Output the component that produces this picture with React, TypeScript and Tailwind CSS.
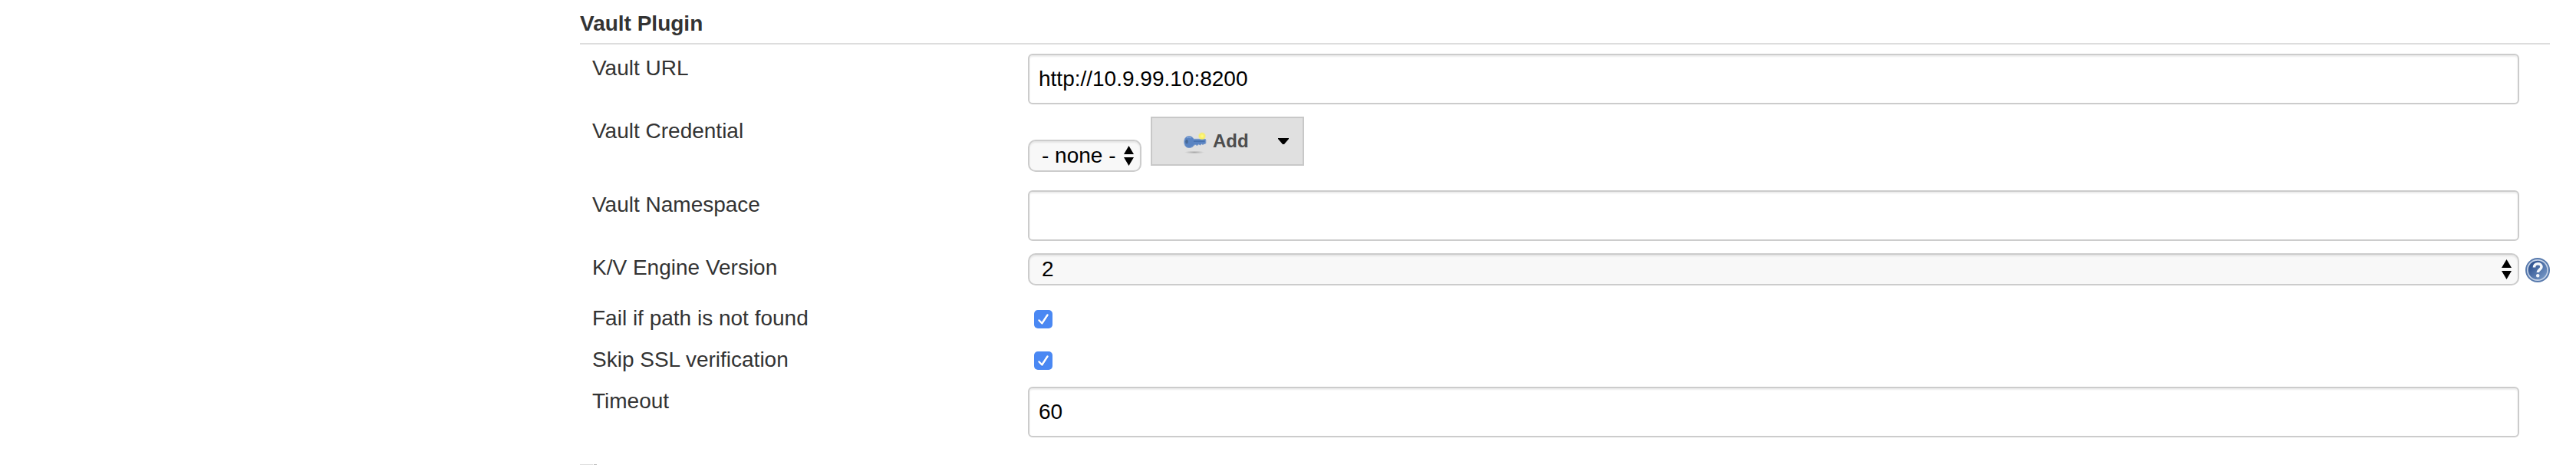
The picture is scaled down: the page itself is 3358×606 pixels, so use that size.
import React from "react";

function Row({ label, height, children }: { label: string; height: string; children?: React.ReactNode }) {
  return (
    <div className={`flex items-start ${height}`}>
      <div className="w-[584px] shrink-0 pl-4 pt-[3px] text-[#333]">{label}</div>
      {children}
    </div>
  );
}

function TextBox({ value }: { value?: string }) {
  return (
    <div className="h-[66px] w-[1944px] rounded-[6px] border-2 border-[#ccc] bg-white pl-3 pt-[15px] text-black shadow-[inset_0_2px_2px_rgba(0,0,0,0.075)]">
      {value}
    </div>
  );
}

function Select({ value, width }: { value: string; width: string }) {
  return (
    <div className={`flex h-[42px] items-start justify-between rounded-[10px] border-2 border-[#ccc] bg-[#f8f8f8] pl-4 pr-2 pt-[3px] text-black shadow-[inset_0_2px_2px_rgba(0,0,0,0.075)] ${width}`}>
      <span className="whitespace-nowrap">{value}</span>
      <svg className="mt-[3px] h-[26px] w-[13px] shrink-0" viewBox="0 0 13 26">
        <path d="M6.5 0 13 11H0zM0 15h13L6.5 26z" fill="#000" />
      </svg>
    </div>
  );
}

function Checkbox() {
  return (
    <svg className="ml-2 mt-2 h-6 w-6" viewBox="0 0 24 24">
      <rect width="24" height="24" rx="5" fill="#4a88f3" />
      <path d="M6.5 14.3 10.3 18.5 17.5 7.5" fill="none" stroke="#3a74dd" strokeWidth="2.4" strokeLinecap="round" strokeLinejoin="round" />
      <path d="M6.5 13.5 10.3 17.5 17.5 6.5" fill="none" stroke="#fff" strokeWidth="2.5" strokeLinecap="round" strokeLinejoin="round" />
    </svg>
  );
}

function KeyIcon() {
  return (
    <svg className="h-8 w-8" viewBox="0 0 32 32">
      <defs>
        <radialGradient id="glow">
          <stop offset="0" stopColor="#fffb8c" />
          <stop offset="0.6" stopColor="#f8ee60" />
          <stop offset="1" stopColor="#f4ea80" stopOpacity="0" />
        </radialGradient>
        <radialGradient id="shade">
          <stop offset="0" stopColor="#999" stopOpacity="0.8" />
          <stop offset="1" stopColor="#999" stopOpacity="0" />
        </radialGradient>
      </defs>
      <ellipse cx="15" cy="28.5" rx="13" ry="2" fill="url(#shade)" />
      <path d="M8 7.5c2.600 0 4.800 1.200 6 3.800h14.500c.8 0 1.300.5 1.300 1.200v3.500c0 .8-.5 1.500-1.300 1.500h-1l-1.500 1-1.500-1-2 1.500-2-1-2 1.500-2-1-2 .5c-1.200 2.300-3.500 3.500-6.500 3.500-4 0-6.200-3-6.200-7.500S4 7.500 8 7.500z" fill="#5a84c2" stroke="#7b9bcb" strokeWidth="1" />
      <path d="M14 14.200h14.500" stroke="#4670ae" strokeWidth="1.500" />
      <path d="M5 9.500c1.500-.8 4-.6 5.500.5" fill="none" stroke="#82a5d8" strokeWidth="1.500" />
      <ellipse cx="5" cy="14.500" rx="1.800" ry="2.800" fill="#486995" />
      <circle cx="25" cy="7.300" r="5.500" fill="url(#glow)" />
    </svg>
  );
}

function HelpIcon() {
  return (
    <svg className="ml-2 mt-[6px] h-8 w-8" viewBox="0 0 32 32">
      <defs>
        <linearGradient id="help" x1="0" y1="0" x2="1" y2="1">
          <stop offset="0" stopColor="#214585" />
          <stop offset="1" stopColor="#7e9fcc" />
        </linearGradient>
      </defs>
      <circle cx="16" cy="16" r="15" fill="#c3d1e6" stroke="#587aad" strokeWidth="2" />
      <circle cx="16" cy="16" r="12.300" fill="url(#help)" />
      <path d="M11.500 12.500c0-3 1.900-4.800 4.700-4.800s4.800 1.500 4.800 4.100c0 3.400-4.800 3.700-4.800 7.200" fill="none" stroke="#f4f7fb" strokeWidth="3.600" />
      <circle cx="16.200" cy="23.300" r="2.200" fill="#f4f7fb" />
    </svg>
  );
}

export default function App() {
  return (
    <main className="flex h-[606px] w-[3358px] flex-col overflow-hidden bg-white pl-[756px] font-['Liberation_Sans',Arial,sans-serif] text-[28px] leading-[32px]">
      <h2 className="h-[58px] w-[2568px] shrink-0 border-b-2 border-[#ddd] pt-[15px] font-bold text-[#333]">Vault Plugin</h2>
      <div className="h-[535px] pt-3">
        <Row label="Vault URL" height="h-[82px]">
          <TextBox value="http://10.9.99.10:8200" />
        </Row>
        <Row label="Vault Credential" height="h-[96px]">
          <div className="flex items-start gap-3">
            <div className="pt-[30px]">
              <Select value="- none -" width="w-[148px]" />
            </div>
            <button className="flex h-16 w-[200px] items-start border-2 border-[#c8c8c8] bg-[#e0e0e0] pl-10 pt-4 text-2xl leading-[28px] font-bold text-[#4d4d4d]">
              <KeyIcon />
              <span className="ml-[7px] w-[85px] text-left">Add</span>
              <svg className="mt-[10px] h-2 w-[14px]" viewBox="0 0 14 8">
                <path d="M0 0h14v1L8 8H6L0 1z" fill="#000" />
              </svg>
            </button>
          </div>
        </Row>
        <Row label="Vault Namespace" height="h-[82px]">
          <TextBox />
        </Row>
        <Row label="K/V Engine Version" height="h-[66px]">
          <Select value="2" width="w-[1944px]" />
          <HelpIcon />
        </Row>
        <Row label="Fail if path is not found" height="h-[54px]">
          <Checkbox />
        </Row>
        <Row label="Skip SSL verification" height="h-[54px]">
          <Checkbox />
        </Row>
        <Row label="Timeout" height="h-[66px]">
          <TextBox value="60" />
        </Row>
      </div>
      <div className="mt-3 flex h-px shrink-0 gap-px">
        <div className="w-[17px] bg-[#ddd]" />
        <div className="w-1 bg-[#bbb]" />
      </div>
    </main>
  );
}
